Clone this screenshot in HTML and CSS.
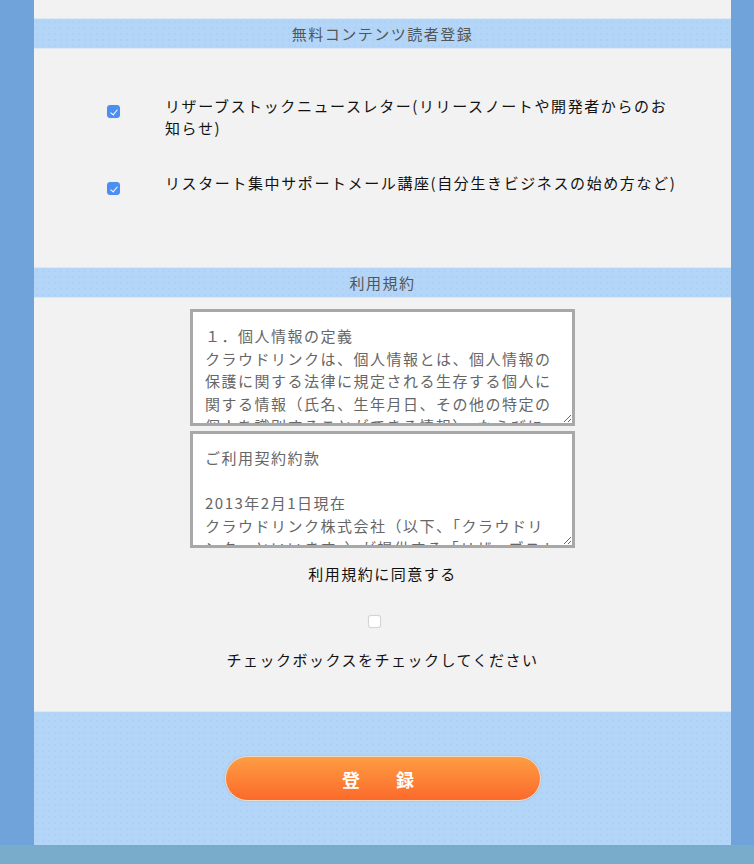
FILE: index.html
```html
<!DOCTYPE html>
<html lang="ja">
<head>
<meta charset="utf-8">
<title>登録フォーム</title>
<link rel="stylesheet" href="styles.css">
</head>
<body>
<div class="page">
  <div class="panel">
    <div class="top-space"></div>
    <h2 class="section-title">無料コンテンツ読者登録</h2>
    <div class="options">
      <label class="option">
        <span class="check-cell"><input type="checkbox" class="cb" checked></span>
        <span class="option-text">リザーブストックニュースレター(リリースノートや開発者からのお<br>知らせ)</span>
      </label>
      <label class="option">
        <span class="check-cell"><input type="checkbox" class="cb" checked></span>
        <span class="option-text">リスタート集中サポートメール講座(自分生きビジネスの始め方など)</span>
      </label>
    </div>
    <h2 class="section-title">利用規約</h2>
    <div class="terms">
      <textarea class="terms-box" readonly>１．個人情報の定義
クラウドリンクは、個人情報とは、個人情報の保護に関する法律に規定される生存する個人に関する情報（氏名、生年月日、その他の特定の個人を識別することができる情報）、ならびに特定の個人と結びついて使用されるメールアドレス、ユーザーＩＤ、パスワード等の情報をいいます。</textarea>
      <textarea class="terms-box" readonly>ご利用契約約款

2013年2月1日現在
クラウドリンク株式会社（以下、「クラウドリンク」といいます。）が提供する「リザーブストック」のご利用にあたり、以下の条件に同意いただく必要があります。</textarea>
      <p class="agree-label">利用規約に同意する</p>
      <div class="agree-check"><input type="checkbox" class="cb"></div>
      <p class="agree-note">チェックボックスをチェックしてください</p>
    </div>
  </div>
  <div class="submit-area">
    <button type="button" class="submit-btn">登　録</button>
  </div>
</div>
<div class="footer-strip"></div>
</body>
</html>
```

FILE: styles.css
```css
html, body {
  margin: 0;
  padding: 0;
}

body {
  background: #6fa3d9;
  font-family: "Noto Sans CJK JP", "Noto Sans", sans-serif;
  color: #111;
}

.page {
  margin-left: 34px;
  width: 697px;
}

.panel {
  background: #f2f2f2;
  padding-bottom: 40px;
  border-bottom: 1px solid #dce8f4;
}

.top-space {
  height: 18px;
}

.section-title {
  margin: 0;
  height: 29px;
  line-height: 29px;
  background-color: #b3d5f8;
  background-image: radial-gradient(rgba(120, 160, 210, 0.1) 0.7px, transparent 1px);
  background-size: 6px 6px;
  border-top: 1px solid #dce8f4;
  border-bottom: 1px solid #dce8f4;
  text-align: center;
  font-size: 15px;
  font-weight: normal;
  letter-spacing: 1.5px;
  color: #555;
}

.options {
  padding: 46px 0 72px;
  display: flex;
  flex-direction: column;
  gap: 33px;
}

.option {
  display: flex;
  align-items: flex-start;
  padding-left: 73px;
}

.check-cell {
  width: 58px;
  flex: none;
  padding-top: 10px;
}

.option-text {
  font-size: 15px;
  line-height: 22px;
  letter-spacing: 1.6px;
  color: #111;
}

.cb {
  -webkit-appearance: none;
  appearance: none;
  display: block;
  width: 13px;
  height: 13px;
  margin: 0;
  border-radius: 3px;
  background: #fff;
  border: 1px solid #d4d4d4;
  box-shadow: 0 0 1px rgba(0, 0, 0, 0.12);
  position: relative;
  box-sizing: border-box;
}

.cb:checked {
  background: #4b8ff3;
  border-color: #4b8ff3;
}

.cb:checked::after {
  content: "";
  position: absolute;
  left: 3.5px;
  top: 1.5px;
  width: 3px;
  height: 6px;
  border-right: 1.6px solid #fff;
  border-bottom: 1.6px solid #fff;
  transform: rotate(40deg);
}

.terms {
  display: flex;
  flex-direction: column;
  align-items: center;
  padding-top: 11px;
}

.terms-box {
  display: block;
  box-sizing: border-box;
  width: 385px;
  height: 117px;
  margin: 0 0 5px;
  padding: 13px 12px;
  border: 3px solid #a8a8a8;
  background: #fff;
  color: #666;
  font-family: "Noto Sans CJK JP", "Noto Sans", sans-serif;
  font-size: 15px;
  line-height: 22.5px;
  letter-spacing: 1.5px;
  overflow: hidden;
  resize: both;
}

.agree-label {
  margin: 10px 0 0;
  font-size: 15px;
  line-height: 22px;
  letter-spacing: 1.5px;
  color: #111;
}

.agree-check {
  padding-top: 30px;
  padding-right: 16px;
}

.agree-note {
  margin: 21px 0 0;
  font-size: 15px;
  line-height: 22px;
  letter-spacing: 1.5px;
  color: #111;
}

.submit-area {
  height: 133px;
  display: flex;
  justify-content: center;
  align-items: flex-start;
  background-color: #b3d5f8;
  background-image: radial-gradient(rgba(120, 160, 210, 0.1) 0.7px, transparent 1px);
  background-size: 6px 6px;
}

.submit-btn {
  margin-top: 44px;
  width: 316px;
  height: 45px;
  border-radius: 23px;
  border: 1px solid #e9dccd;
  background: linear-gradient(#fe9d42, #fb6a2b);
  box-shadow: 0 0 2px rgba(140, 140, 140, 0.45);
  color: #fff;
  font-family: "Noto Sans CJK JP", "Noto Sans", sans-serif;
  font-size: 18px;
  font-weight: bold;
  letter-spacing: 9px;
  padding: 0;
  cursor: pointer;
}

.footer-strip {
  height: 40px;
  background: #79abca;
}
```
